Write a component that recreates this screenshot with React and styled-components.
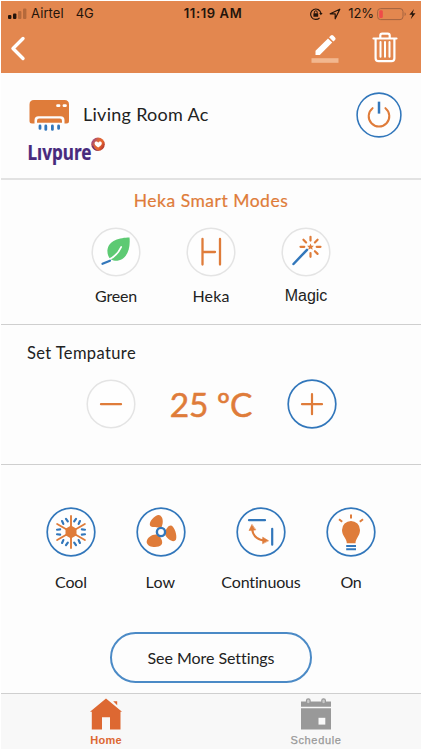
import React from 'react';
import styled, { createGlobalStyle } from 'styled-components';

const GlobalStyle = createGlobalStyle`
  * {
    box-sizing: border-box;
  }

  body {
    margin: 0;
    background: #fff;
  }

  button {
    padding: 0;
    border: none;
    background: none;
    font: inherit;
    color: inherit;
    cursor: pointer;
  }

  svg {
    display: block;
    flex-shrink: 0;
  }
`;

const ORANGE = '#df7c3a';
const BLUE = '#3277bb';

const Screen = styled.main`
  width: 420px;
  height: 748px;
  margin: 1px;
  display: flex;
  flex-direction: column;
  background: #fdfdfd;
  color: #222;
  font-family: Lato, 'Noto Sans', sans-serif;
  font-variant-ligatures: none;
`;

const Header = styled.header`
  height: 72px;
  background: #e3874f;
`;

const StatusBar = styled.div`
  height: 25px;
  padding: 0 5px 0 6px;
  display: grid;
  grid-template-columns: 1fr auto 1fr;
  align-items: center;
  color: #24140b;
  font-family: Inter, 'Liberation Sans', sans-serif;
  font-size: 13px;
  line-height: 25px;
`;

const StatusGroup = styled.div`
  display: flex;
  align-items: center;
  justify-content: ${props => (props.$end ? 'flex-end' : 'flex-start')};
`;

const Carrier = styled.span`
  margin: 0 12px 0 4px;
  letter-spacing: 0.1px;
`;

const Network = styled.span`
  letter-spacing: -0.2px;
`;

const Clock = styled.span`
  padding-left: 3px;
  font-weight: 600;
  letter-spacing: 0.6px;
`;

const Percent = styled.span`
  margin: 0 3px 0 5px;
  letter-spacing: -0.1px;
`;

const NavBar = styled.nav`
  height: 47px;
  padding: 0 23px 0 9px;
  display: flex;
  align-items: flex-start;
`;

const NavButton = styled.button`
  margin-top: ${props => props.$top}px;
  margin-left: ${props => props.$left || 0};
`;

const Section = styled.section`
  height: ${props => props.$height}px;
  border-bottom: ${props => props.$line || '1px solid #cfcfcf'};
`;

const DeviceSection = styled(Section)`
  display: flex;
  align-items: flex-start;
  justify-content: space-between;
  padding: 19px 19px 0 26px;
`;

const DeviceInfo = styled.div`
  display: flex;
  flex-direction: column;
`;

const DeviceName = styled.div`
  height: 44px;
  display: flex;
  align-items: center;
  gap: 13px;
  font-size: 18px;
  line-height: 44px;
  letter-spacing: 0.28px;
  padding-left: 1px;
`;

const ModesSection = styled(Section)`
  padding-top: 10px;
`;

const ModesTitle = styled.h2`
  margin: 0 0 15px;
  text-align: center;
  color: ${ORANGE};
  font-size: 17.5px;
  font-weight: 400;
  line-height: 22px;
  letter-spacing: 0.5px;
  -webkit-text-stroke: 0.2px ${ORANGE};
`;

const Modes = styled.div`
  display: grid;
  grid-template-columns: repeat(3, 95px);
  justify-content: center;
`;

const Option = styled.button`
  width: ${props => props.$width || 95}px;
  display: flex;
  flex-direction: column;
  align-items: center;
`;

const OptionLabel = styled.span`
  margin-top: ${props => props.$gap}px;
  font-family: ${props => (props.$system ? "'Liberation Sans', sans-serif" : 'inherit')};
  font-size: ${props => (props.$system ? 16 : 16)}px;
  line-height: 20px;
  letter-spacing: ${props => props.$spacing || 0}px;
  color: #222;
`;

const TemperatureSection = styled(Section)`
  padding-top: 18px;
`;

const TemperatureTitle = styled.h3`
  margin: 0 0 15px 26px;
  font-size: 16.5px;
  font-weight: 400;
  line-height: 21px;
  letter-spacing: 0.38px;
`;

const TemperatureRow = styled.div`
  display: flex;
  align-items: center;
  justify-content: center;
`;

const Reading = styled.output`
  width: 151px;
  text-align: center;
  color: ${ORANGE};
  font-size: 33.5px;
  line-height: 48px;
  letter-spacing: -0.2px;
  white-space: pre;
  -webkit-text-stroke: 0.5px ${ORANGE};
`;

const ControlsSection = styled(Section)`
  padding: 42px 0 0 25px;
`;

const Controls = styled.div`
  display: flex;
`;

const SettingsButton = styled.button`
  display: block;
  width: 202px;
  height: 51px;
  margin: 40px 0 0 84px;
  border: 2px solid #4b8ac6;
  border-radius: 26px;
  font-size: 16px;
  letter-spacing: -0.05px;
  color: #222;
`;

const TabBar = styled.footer`
  flex: 1;
  display: grid;
  grid-template-columns: 1fr 1fr;
  background: #f8f8f8;
`;

const Tab = styled.button`
  display: flex;
  flex-direction: column;
  align-items: center;
  justify-content: flex-start;
  padding-top: 4px;
  color: ${props => (props.$active ? '#dd6832' : '#999')};
  font-family: 'Liberation Sans', sans-serif;
  font-size: 11px;
  font-weight: ${props => (props.$active ? 600 : 400)};
  line-height: 14px;
  letter-spacing: ${props => (props.$active ? 0.25 : 0.65)}px;
  -webkit-text-stroke: ${props => (props.$active ? 0 : 0.25)}px;
`;

const TabLabel = styled.span`
  margin-top: 2px;
`;

const SignalIcon = () => (
  <svg width="20" height="12" viewBox="0 0 20 12">
    <rect x="1" y="7" width="3.4" height="4" rx="1" fill="#24140b" />
    <rect x="6" y="5.5" width="3.4" height="5.5" rx="1" fill="#24140b" />
    <rect x="11" y="3" width="3.4" height="8" rx="1" fill="#b5693b" />
    <rect x="16" y="0.5" width="3.4" height="10.5" rx="1" fill="#b5693b" />
  </svg>
);

const RotationLockIcon = () => (
  <svg width="14" height="14" viewBox="0 0 14 14" fill="none" stroke="#24140b" strokeWidth="1.2">
    <path d="M10.6 10.8A5.2 5.2 0 1 1 11.9 6.2" />
    <path d="M10.2 6h3.4l-1.7 2.3z" fill="#24140b" stroke="none" />
    <rect x="4.4" y="6.2" width="4.8" height="3.6" rx="0.5" fill="#24140b" stroke="none" />
    <path d="M5.4 6.4V5.2a1.4 1.4 0 0 1 2.8 0v1.2" strokeWidth="1" />
  </svg>
);

const LocationIcon = () => (
  <svg width="20" height="12" viewBox="-6 0 20 12">
    <path d="M1.2 5.8 10.8 1.2 6.2 10.8V5.8z" fill="none" stroke="#24140b" strokeWidth="1.2" strokeLinejoin="round" />
  </svg>
);

const BatteryIcon = () => (
  <svg width="39" height="14" viewBox="0 0 39 14">
    <rect x="0.6" y="1.6" width="25.4" height="11" rx="3" fill="none" stroke="#a36340" strokeWidth="1" />
    <rect x="2.2" y="3.2" width="3.6" height="7.8" rx="1.2" fill="#ef4b48" />
    <path d="M27.6 5.2c1.6.5 1.6 3.3 0 3.8z" fill="#a36340" />
    <path d="M37 2 32.4 7.8h2.8L33.7 12.2 38.5 6.2h-2.9z" fill="#24140b" />
  </svg>
);

const BackIcon = () => (
  <svg width="16" height="25" viewBox="0 0 16 25" fill="none">
    <path d="M13 2.5 3 12.5l10 10" stroke="#fff" strokeWidth="3.4" strokeLinecap="round" strokeLinejoin="round" />
  </svg>
);

const EditIcon = () => (
  <svg width="28" height="30" viewBox="0 0 28 30">
    <path d="M4.5 16.8 17 4.4l4.2 4.2L8.8 21H4.5zM18.1 3.3l1.7-1.7q1.2-1.1 2.4 0l1.9 1.9q1.1 1.2 0 2.4l-1.8 1.7z" fill="#fff" />
    <rect x="0.5" y="24.2" width="27" height="4.6" fill="#f2b78f" />
  </svg>
);

const TrashIcon = () => (
  <svg width="26" height="31" viewBox="0 0 26 31" fill="none" stroke="#fff" strokeWidth="2.2" strokeLinecap="round" strokeLinejoin="round">
    <path d="M1.5 6.5h23M8.3 6V3.6q0-2 2-2h5.4q2 0 2 2V6M3.6 7v19.2q0 3 3 3h12.8q3 0 3-3V7" />
    <path d="M8.5 10v14.8M13 10v14.8M17.5 10v14.8" strokeWidth="2" />
  </svg>
);

const AirConditionerIcon = () => (
  <svg width="42" height="33" viewBox="0 0 42 33">
    <path d="M6.5 25.5H4q-2.5 0-2.5-2.5V6.5Q1.5 2 6 2h30.5Q41 2 41 6.5V23q0 2.5-2.5 2.5h-2v-3.3q0-4-4-4h-22q-4 0-4 4z" fill={ORANGE} />
    <path d="M9 24.8v-2q0-2.2 2.2-2.2h20.6q2.2 0 2.2 2.2v2z" fill={ORANGE} />
    <rect x="28.2" y="6.2" width="4.2" height="2.8" rx="1.3" fill="#fff" />
    <rect x="34.6" y="6.2" width="4.2" height="2.8" rx="1.3" fill="#fff" />
    <path d="M12 28v2.4M17.8 28v3.4M24.4 28v3.4M30.6 28v2.4" stroke={BLUE} strokeWidth="2.8" strokeLinecap="round" />
  </svg>
);

const LivpureLogo = () => (
  <svg width="80" height="32" viewBox="0 0 80 32">
    <defs>
      <linearGradient id="swirl" x1="0" y1="0.2" x2="1" y2="0.8">
        <stop offset="0" stopColor="#8c3f91" />
        <stop offset="0.35" stopColor="#d9643e" />
        <stop offset="0.65" stopColor="#e8662e" />
        <stop offset="1" stopColor="#a52b2f" />
      </linearGradient>
    </defs>
    <text
      x="0.5"
      y="24"
      fill="#472a7d"
      stroke="#472a7d"
      strokeWidth="0.2"
      fontFamily="'Noto Sans', sans-serif"
      fontSize="21"
      fontWeight="700"
      textLength="64"
      lengthAdjust="spacingAndGlyphs"
    >
      Lıvpure
    </text>
    <circle cx="71" cy="8.2" r="6.8" fill="url(#swirl)" />
    <path d="M65 10.2q2 5 7 4.5-5-1-6-5.5z" fill="#5b2d80" />
    <path d="M71.2 11.6c-2-1.6-3.6-2.7-3.6-4.2 0-2.3 2.8-2.4 3.6-.7.8-1.7 3.6-1.6 3.6.7 0 1.5-1.6 2.6-3.6 4.2z" fill="#fff" />
  </svg>
);

// Round outline shared by all the icon buttons
const RoundIcon = ({ size = 50, muted, children }) => (
  <svg width={size} height={size} viewBox="-25 -25 50 50" fill="none" strokeLinecap="round">
    <circle r="23.8" stroke={muted ? '#e4e4e4' : BLUE} strokeWidth={muted ? 1.5 : 1.7} fill="#fefefe" />
    {children}
  </svg>
);

const PowerIcon = () => (
  <RoundIcon size={46}>
    <path d="M-7-7.4A11.2 11.2 0 1 0 7-7.4" stroke={ORANGE} strokeWidth="2.2" />
    <path d="M0-14.5V-1.5" stroke={BLUE} strokeWidth="2.7" strokeLinecap="butt" />
  </RoundIcon>
);

const LeafIcon = () => (
  <RoundIcon muted>
    <path d="M13.5-14.5C4-14.5-8-11.5-8.6-1.5-8.8 3.8-6.2 8.4-1 8.8 10.5 9.2 14.8-3 13.5-14.5z" fill="#5dca73" />
    <path d="M5.2-5C2.5 1 -2 5.4-8 8" stroke="#fff" strokeWidth="1.8" />
    <path d="M-13.5 11.8-6 8.7" stroke={BLUE} strokeWidth="2.2" />
  </RoundIcon>
);

const HekaIcon = () => (
  <RoundIcon muted>
    <path d="M-8.5-13V12.5M9-13V12.5M-8 0H4" stroke={ORANGE} strokeWidth="2.3" />
  </RoundIcon>
);

const WandIcon = () => (
  <RoundIcon muted>
    <path d="M-12.5 12 1-2.2" stroke={BLUE} strokeWidth="2.5" />
    <g transform="translate(4.5 -5.2)">
      {[0, 45, 90, 135, 180, 270, 315].map(angle => (
        <path key={angle} d="M0-10V-6.2" transform={`rotate(${angle})`} stroke={ORANGE} strokeWidth="2.2" />
      ))}
      <path d="M0-3.4 1-1.1 3.4-1 1.6.7 2.2 3 0 1.7-2.2 3-1.6.7-3.4-1-1-1.1z" fill={ORANGE} />
    </g>
  </RoundIcon>
);

const MinusIcon = () => (
  <RoundIcon muted>
    <path d="M-10 .2H10" stroke={ORANGE} strokeWidth="2.3" />
  </RoundIcon>
);

const PlusIcon = () => (
  <RoundIcon>
    <path d="M-10 .2H10M0-9.8V10.2" stroke={ORANGE} strokeWidth="2.2" />
  </RoundIcon>
);

const SnowflakeIcon = () => (
  <RoundIcon>
    {[0, 60, 120, 180, 240, 300].map(angle => (
      <g key={angle} transform={`rotate(${angle})`}>
        <path d="M0 0V-16" stroke={ORANGE} strokeWidth="1.9" />
        <path d="M-5-13.2-3.2-10.7M5-13.2 3.2-10.7" stroke={BLUE} strokeWidth="2.2" />
      </g>
    ))}
    <path d="M0-6.4 5.5-3.2V3.2L0 6.4-5.5 3.2V-3.2z" fill={ORANGE} />
  </RoundIcon>
);

const FanIcon = () => (
  <RoundIcon>
    <path d="M-2-4.3C-4.8-5.8-9.5-3.8-11-6.6-12.3-10-6.5-17-2.2-17 2.4-16.2 2.6-9 .6-5z" fill={ORANGE} />
    <path d="M4.6-1.8C6.2-3.6 7-6.8 10.2-6.5 13.6-5.2 16.4 3.4 15 7.6 12.6 11.6 6.4 7 4.2 3z" fill={ORANGE} />
    <path d="M-4 2.6C-8.5 2-14.2 5.4-14.4 10-13.8 15-6.5 15.8-2.4 14.6 2.8 12.6 1.4 8.4-.8 5.2z" fill={ORANGE} />
    <circle r="4.1" stroke={BLUE} strokeWidth="2.4" fill="#fff" />
  </RoundIcon>
);

const SwingIcon = () => (
  <RoundIcon>
    <path d="M-12-11.8H4M11.2-3.2V12.7" stroke={BLUE} strokeWidth="2.2" />
    <path d="M-8.9-3.5Q-8 7.5 3.5 8.5" stroke={ORANGE} strokeWidth="2.1" />
    <path d="M-9.2-7.3-12-1.5l6.5-.6zM7.3 8.6 1.7 5.2l-.1 6.2z" fill={ORANGE} stroke={ORANGE} strokeWidth=".6" strokeLinejoin="round" />
  </RoundIcon>
);

const BulbIcon = () => (
  <RoundIcon>
    <path d="M-4.2 11.2C-4.2 6.2-9 3.9-9-2.1A9 9 0 0 1 9-2.1C9 3.9 4.5 6.2 4.5 11.2z" fill={ORANGE} />
    <path d="M0-17.6v4M-12-12.8l3.2 2.5M12-12.8l-3.2 2.5" stroke={ORANGE} strokeWidth="2" strokeLinecap="butt" />
    <path d="M-4.8 14H5M-4.8 17.2H5" stroke={BLUE} strokeWidth="1.9" strokeLinecap="butt" />
  </RoundIcon>
);

const HomeIcon = () => (
  <svg width="34" height="33" viewBox="0 0 34 33" fill="#dd6832">
    <path d="M17 0.5 33 13.8H31.5V31.5H21V19.3H13V31.5H2.8V13.8H1z" />
    <path d="M24.2 3.2H28.2V7.2z" />
  </svg>
);

const CalendarIcon = () => (
  <svg width="34" height="33" viewBox="0 0 34 33">
    <path d="M2 3.5H32v5.2H2zM2 10.2H32V31.5H2z" fill="#999" />
    <rect x="7.5" y="0.8" width="3.6" height="5" rx="1.8" fill="#c9c9c9" stroke="#999" strokeWidth="1.2" />
    <rect x="22.8" y="0.8" width="3.6" height="5" rx="1.8" fill="#c9c9c9" stroke="#999" strokeWidth="1.2" />
    <rect x="19.5" y="19.8" width="6.8" height="6.8" fill="#fafafa" />
  </svg>
);

const modes = [
  { label: 'Green', icon: LeafIcon, spacing: -0.2 },
  { label: 'Heka', icon: HekaIcon, spacing: 0.1 },
  { label: 'Magic', icon: WandIcon, system: true, spacing: 0 },
];

const controls = [
  { label: 'Cool', icon: SnowflakeIcon, width: 90, spacing: -0.1 },
  { label: 'Low', icon: FanIcon, width: 89, spacing: 0.2 },
  { label: 'Continuous', icon: SwingIcon, width: 112, spacing: -0.15 },
  { label: 'On', icon: BulbIcon, width: 68, spacing: -0.3 },
];

const App = () => (
  <>
    <GlobalStyle />
    <Screen>
      <Header>
        <StatusBar>
          <StatusGroup>
            <SignalIcon />
            <Carrier>Airtel</Carrier>
            <Network>4G</Network>
          </StatusGroup>
          <Clock>11:19 AM</Clock>
          <StatusGroup $end>
            <RotationLockIcon />
            <LocationIcon />
            <Percent>12%</Percent>
            <BatteryIcon />
          </StatusGroup>
        </StatusBar>
        <NavBar>
          <NavButton $top={10} aria-label="Back"><BackIcon /></NavButton>
          <NavButton $top={8} $left="auto" aria-label="Edit"><EditIcon /></NavButton>
          <NavButton $top={6} $left="33px" aria-label="Delete"><TrashIcon /></NavButton>
        </NavBar>
      </Header>

      <DeviceSection $height={107} $line="2px solid #e2e2e2">
        <DeviceInfo>
          <DeviceName>
            <AirConditionerIcon />
            Living Room Ac
          </DeviceName>
          <LivpureLogo />
        </DeviceInfo>
        <NavButton $top={0} aria-label="Power"><PowerIcon /></NavButton>
      </DeviceSection>

      <ModesSection $height={145}>
        <ModesTitle>Heka Smart Modes</ModesTitle>
        <Modes>
          {modes.map(({ label, icon: Icon, system, spacing }) => (
            <Option key={label}>
              <Icon />
              <OptionLabel $gap={9} $system={system} $spacing={spacing}>{label}</OptionLabel>
            </Option>
          ))}
        </Modes>
      </ModesSection>

      <TemperatureSection $height={140}>
        <TemperatureTitle>Set Tempature</TemperatureTitle>
        <TemperatureRow>
          <button aria-label="Decrease"><MinusIcon /></button>
          <Reading>25 ºC</Reading>
          <button aria-label="Increase"><PlusIcon /></button>
        </TemperatureRow>
      </TemperatureSection>

      <ControlsSection $height={229}>
        <Controls>
          {controls.map(({ label, icon: Icon, width, spacing }) => (
            <Option key={label} $width={width}>
              <Icon />
              <OptionLabel $gap={15} $spacing={spacing}>{label}</OptionLabel>
            </Option>
          ))}
        </Controls>
        <SettingsButton>See More Settings</SettingsButton>
      </ControlsSection>

      <TabBar>
        <Tab $active>
          <HomeIcon />
          <TabLabel>Home</TabLabel>
        </Tab>
        <Tab>
          <CalendarIcon />
          <TabLabel>Schedule</TabLabel>
        </Tab>
      </TabBar>
    </Screen>
  </>
);

export default App;
